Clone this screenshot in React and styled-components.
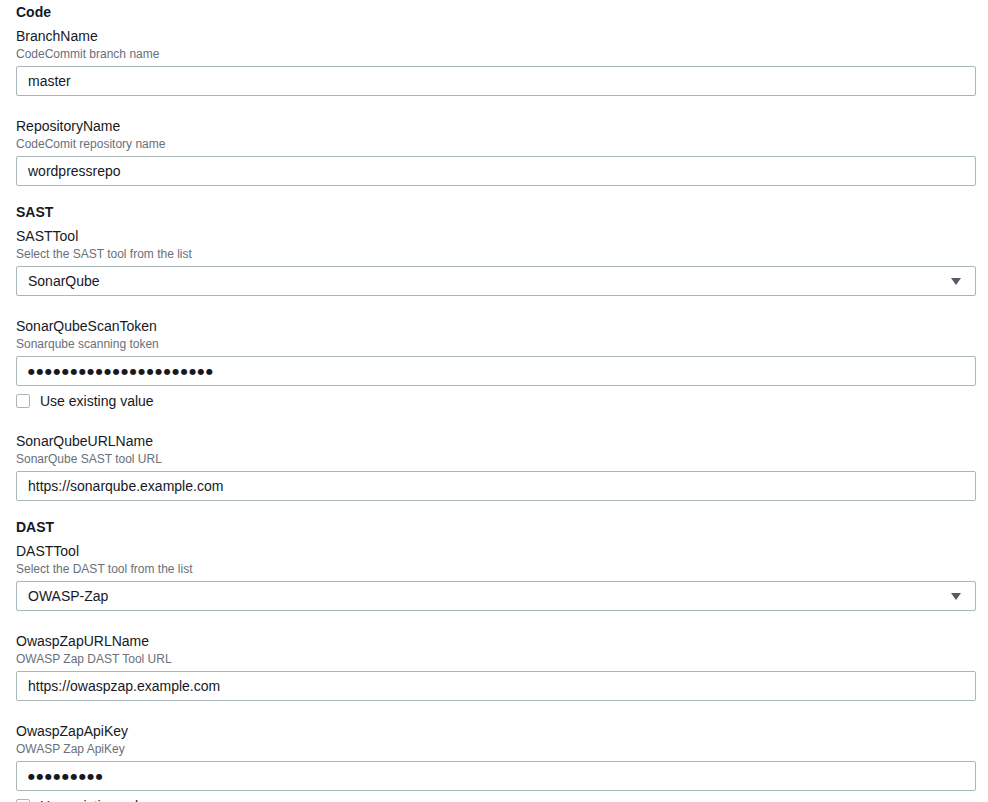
import styled, { createGlobalStyle } from 'styled-components';

const fields = [
  {
    section: 'Code',
    items: [
      { label: 'BranchName', desc: 'CodeCommit branch name', value: 'master' },
      { label: 'RepositoryName', desc: 'CodeComit repository name', value: 'wordpressrepo' },
    ],
  },
  {
    section: 'SAST',
    items: [
      { label: 'SASTTool', desc: 'Select the SAST tool from the list', value: 'SonarQube', select: true },
      { label: 'SonarQubeScanToken', desc: 'Sonarqube scanning token', secret: 22 },
      { label: 'SonarQubeURLName', desc: 'SonarQube SAST tool URL', value: 'https://sonarqube.example.com' },
    ],
  },
  {
    section: 'DAST',
    items: [
      { label: 'DASTTool', desc: 'Select the DAST tool from the list', value: 'OWASP-Zap', select: true },
      { label: 'OwaspZapURLName', desc: 'OWASP Zap DAST Tool URL', value: 'https://owaspzap.example.com' },
      { label: 'OwaspZapApiKey', desc: 'OWASP Zap ApiKey', secret: 9 },
    ],
  },
];

function Field({ item }) {
  return (
    <FieldBlock>
      <Label>{item.label}</Label>
      <Description>{item.desc}</Description>
      {item.select ? (
        <SelectBox>
          <span>{item.value}</span>
          <svg width="10" height="7" viewBox="0 0 10 7">
            <path d="M0 0h10L5 7z" fill="#545b64" />
          </svg>
        </SelectBox>
      ) : (
        <Input
          type="text"
          readOnly
          $masked={!!item.secret}
          defaultValue={item.secret ? '●'.repeat(item.secret) : item.value}
        />
      )}
      {item.secret && (
        <CheckRow>
          <CheckBox />
          <span>Use existing value</span>
        </CheckRow>
      )}
    </FieldBlock>
  );
}

function App() {
  return (
    <>
      <GlobalStyle />
      <Page>
        {fields.map(group => (
          <Section key={group.section}>
            <Heading>{group.section}</Heading>
            <FieldList>
              {group.items.map(item => (
                <Field key={item.label} item={item} />
              ))}
            </FieldList>
          </Section>
        ))}
      </Page>
    </>
  );
}

export default App;

const GlobalStyle = createGlobalStyle`
  html, body {
    margin: 0;
    overflow: hidden;
    background-color: #fff;
  }

  body {
    font-family: 'Liberation Sans', Arial, sans-serif;
    color: #16191f;
  }
`;

const Page = styled.main`
  display: flex;
  flex-direction: column;
  gap: 16px;
  width: 960px;
  padding: 2px 0 0 16px;
`;

const Section = styled.section`
  display: flex;
  flex-direction: column;
  gap: 4px;
`;

const Heading = styled.h2`
  margin: 0;
  font-size: 14px;
  font-weight: 700;
  line-height: 20px;
`;

const FieldList = styled.div`
  display: flex;
  flex-direction: column;
  gap: 20px;
`;

const FieldBlock = styled.div`
  display: flex;
  flex-direction: column;
`;

const Label = styled.label`
  font-size: 14px;
  line-height: 20px;
`;

const Description = styled.span`
  margin-bottom: 4px;
  color: #687078;
  font-size: 12px;
  line-height: 16px;
`;

const Input = styled.input`
  box-sizing: border-box;
  width: 960px;
  height: 30px;
  margin: 0;
  padding: 0 11px;
  border: 1px solid #aab7b8;
  border-radius: 2px;
  outline: none;
  background-color: #fff;
  color: #16191f;
  font-family: ${({ $masked }) =>
    $masked ? "'DejaVu Sans', sans-serif" : "'Liberation Sans', Arial, sans-serif"};
  font-size: ${({ $masked }) => ($masked ? '8px' : '14px')};
  letter-spacing: ${({ $masked }) => ($masked ? '1.5px' : 'normal')};
`;

const SelectBox = styled.div`
  display: flex;
  align-items: center;
  justify-content: space-between;
  box-sizing: border-box;
  width: 960px;
  height: 30px;
  padding: 0 14px 0 11px;
  border: 1px solid #aab7b8;
  border-radius: 2px;
  font-size: 14px;
`;

const CheckRow = styled.div`
  display: flex;
  align-items: center;
  gap: 10px;
  margin-top: 5px;
  font-size: 14px;
  line-height: 20px;
`;

const CheckBox = styled.span`
  box-sizing: border-box;
  width: 14px;
  height: 14px;
  border: 1px solid #aab7b8;
  border-radius: 2px;
  background-color: #fff;
`;
